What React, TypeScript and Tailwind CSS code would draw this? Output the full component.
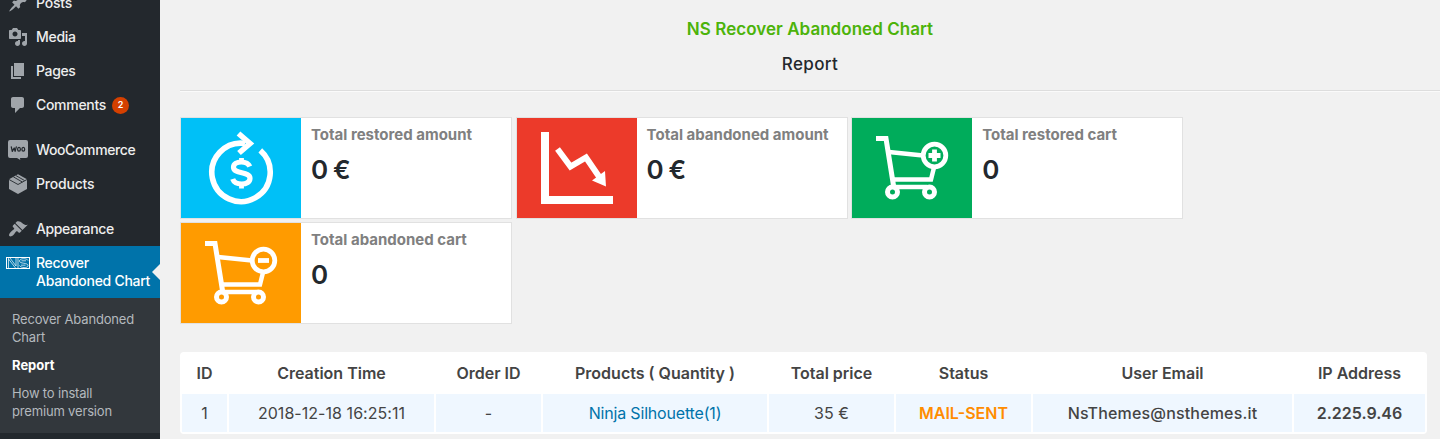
import type { ReactNode } from "react";

const postPath =
  "M10.44 3.02l1.82-1.82 6.36 6.35-1.83 1.82c-1.05-.68-2.48-.57-3.41.36l-.75.75c-.92.93-1.04 2.35-.35 3.41l-1.83 1.82-2.41-2.41-2.8 2.79c-.42.42-3.38 2.71-3.8 2.29s1.86-3.39 2.28-3.81l2.79-2.79L4.1 9.36l1.83-1.82c1.05.69 2.48.57 3.4-.36l.75-.75c.93-.92 1.05-2.35.36-3.41z";
const mediaPath =
  "M13 11V4c0-.55-.45-1-1-1h-1.67L9 1H5L3.67 3H2c-.55 0-1 .45-1 1v7c0 .55.45 1 1 1h10c.55 0 1-.45 1-1zM7 4.5c1.38 0 2.5 1.12 2.5 2.5S8.38 9.5 7 9.5 4.5 8.38 4.5 7 5.62 4.5 7 4.5zM14 6h5v10.5c0 1.38-1.12 2.5-2.5 2.5S14 17.88 14 16.5s1.12-2.5 2.5-2.5c.17 0 .34.02.5.05V9h-3V6zm-4 8.05V13h2v3.5c0 1.38-1.12 2.5-2.5 2.5S7 17.88 7 16.5 8.12 14 9.5 14c.17 0 .34.02.5.05z";
const pagePath = "M6 15V2h10v13H6zm-1 1h8v2H3V5h2v11z";
const commentPath =
  "M5 2h9c1.1 0 2 .9 2 2v7c0 1.1-.9 2-2 2h-2l-5 5v-5H5c-1.1 0-2-.9-2-2V4c0-1.1.9-2 2-2z";
const appearancePath =
  "M14.48 11.06L7.41 3.99l1.5-1.5c.5-.56 2.3-.47 3.51.32 1.21.8 1.43 1.28 2.91 2.1 1.18.64 2.45 1.26 4.45.85zm-.71.71L6.7 4.7 4.93 6.47c-.39.39-.39 1.02 0 1.41l1.06 1.06c.39.39.39 1.03 0 1.42-.6.6-1.43 1.11-2.21 1.69-.35.26-.7.53-1.01.84C1.43 14.23.4 16.08 1.4 17.07c.99 1 2.84-.03 4.18-1.36.31-.31.58-.66.85-1.02.57-.78 1.08-1.61 1.69-2.21.39-.39 1.02-.39 1.41 0l1.06 1.06c.39.39 1.02.39 1.41 0z";

function Glyph({ d }: { d: string }) {
  return (
    <svg viewBox="0 0 20 20" className="size-5 fill-[#a0a5aa]">
      <path d={d} />
    </svg>
  );
}

function WooIcon() {
  return (
    <svg viewBox="0 0 20 20" className="size-5">
      <path
        d="M2 0h16a2 2 0 0 1 2 2v14a2 2 0 0 1-2 2h-6l.3 2L9 18H2a2 2 0 0 1-2-2V2a2 2 0 0 1 2-2z"
        fill="#a0a5aa"
      />
      <g fill="none" stroke="#23282d" strokeWidth="1.25" strokeLinecap="round" strokeLinejoin="round">
        <path d="M3.300 6.800l1 4.600 1.900-3.400.9 3.400 1.200-4.600" />
        <ellipse cx="11" cy="9.200" rx="1.400" ry="1.900" />
        <ellipse cx="15.300" cy="9.200" rx="1.400" ry="1.900" />
      </g>
    </svg>
  );
}

function ProductsIcon() {
  return (
    <svg viewBox="0 0 20 20" className="size-5">
      <path d="M10 0.200L19 5.300v9.600l-9 5.100-9-5.100V5.300z" fill="#a0a5aa" />
      <path
        d="M1 5.500l9 5 9-5M5.300 2.800l9 5.200M7.800 1.500l8.700 5"
        fill="none"
        stroke="#23282d"
        strokeWidth="0.900"
      />
    </svg>
  );
}

function NsIcon() {
  return (
    <svg viewBox="0 0 24 12" className="h-3 w-6" fill="none" stroke="#fff" strokeWidth="0.700">
      <rect x="0.500" y="0.500" width="23" height="11" strokeWidth="1" />
      <path d="M2.500 11V1M4 1l6 8V1M2.500 2l7 9M12 11V1" />
      <path d="M22 3.500C21 1 13.500 1 13.500 4S22 5.500 22 8.500s-7.500 2.500-8.500 0M20 3.800h-4.500M19.500 8.200H15" />
    </svg>
  );
}

function MenuItem({ icon, children }: { icon: ReactNode; children: ReactNode }) {
  return (
    <div className="flex h-[34px] items-center gap-2 pl-2 text-[14px] font-medium leading-[18px] text-[#eee]">
      {icon}
      {children}
    </div>
  );
}

function Sidebar() {
  return (
    <aside className="w-[160px] shrink-0 overflow-hidden bg-[#23282d]">
      <nav className="-mt-[14px]">
        <MenuItem icon={<Glyph d={postPath} />}>
          <span className="tracking-[-0.2px]">Posts</span>
        </MenuItem>
        <MenuItem icon={<Glyph d={mediaPath} />}>
          <span className="tracking-[-0.3px]">Media</span>
        </MenuItem>
        <MenuItem icon={<Glyph d={pagePath} />}>
          <span className="tracking-[-0.35px]">Pages</span>
        </MenuItem>
        <MenuItem icon={<Glyph d={commentPath} />}>
          <span className="tracking-[-0.3px]">Comments</span>
          <span className="-ml-0.5 flex size-[17px] items-center justify-center rounded-full bg-[#d54000] text-[9px] font-semibold text-white">
            2
          </span>
        </MenuItem>
        <div className="h-[11px]" />
        <MenuItem icon={<WooIcon />}>
          <span className="tracking-[-0.38px]">WooCommerce</span>
        </MenuItem>
        <MenuItem icon={<ProductsIcon />}>
          <span className="tracking-[-0.2px]">Products</span>
        </MenuItem>
        <div className="h-[11px]" />
        <MenuItem icon={<Glyph d={appearancePath} />}>
          <span className="tracking-[-0.38px]">Appearance</span>
        </MenuItem>
        <div className="relative flex h-[52px] bg-[#0073aa] pl-1.5 pt-2 text-[14px] font-medium leading-[18px] text-white">
          <span className="mt-[3px] w-[30px]">
            <NsIcon />
          </span>
          <span className="whitespace-nowrap tracking-[-0.28px]">
            Recover
            <br />
            Abandoned Chart
          </span>
          <svg viewBox="0 0 8 16" className="absolute right-0 top-[18px] h-4 w-2 fill-[#f1f1f1]">
            <path d="M8 0v16L0 8z" />
          </svg>
        </div>
        <div className="flex h-[135px] flex-col gap-2.5 whitespace-nowrap bg-[#32373c] pl-3 pt-3 text-[13px] leading-[18px] tracking-[-0.17px] text-[#b4b9be]">
          <p>
            Recover Abandoned
            <br />
            Chart
          </p>
          <p className="font-bold tracking-normal text-white">Report</p>
          <p>
            How to install
            <br />
            premium version
          </p>
        </div>
      </nav>
    </aside>
  );
}

function MoneyIcon() {
  return (
    <svg viewBox="0 0 120 100" className="h-[100px] w-[120px]" fill="none" stroke="#fff">
      <path d="M79.300 32.400A29.200 29.200 0 1 1 64 25.400" strokeWidth="5.600" />
      <path d="M57.500 15.500L69 25.500 58 35" strokeWidth="5.600" />
      <path
        d="M68.800 48.500c-1.300-3-4.800-4.500-8.500-4.500-4.600 0-7.800 2.200-7.800 5.300 0 7.200 16.500 3.800 16.500 11 0 3.700-3.500 5.700-8.300 5.700-4.200 0-7.800-1.600-9-5"
        strokeWidth="5.200"
      />
      <path d="M60.500 40v4M60.500 65v5.500" strokeWidth="4.800" />
    </svg>
  );
}

function DeclineIcon() {
  return (
    <svg viewBox="0 0 120 100" className="h-[100px] w-[120px]" fill="none" stroke="#fff">
      <path d="M28 14v68h68" strokeWidth="8" />
      <path d="M40.500 31L53.500 48.500 69 39.500 83 60" strokeWidth="6" />
      <path d="M89 68.500L88 53 75 62.500z" fill="#fff" stroke="none" />
    </svg>
  );
}

function CartIcon({ plus }: { plus?: boolean }) {
  return (
    <svg viewBox="0 0 120 100" className="h-[100px] w-[120px]" fill="none" stroke="#fff">
      <path d="M24 20.500h10l7.500 47" strokeWidth="5" />
      <path d="M37 34l34 3.500M40 61.500h39l3-12" strokeWidth="4.500" />
      <path d="M43 69h32" strokeWidth="4.500" />
      <circle cx="40.500" cy="74" r="5" strokeWidth="5" />
      <circle cx="77.500" cy="74" r="5" strokeWidth="5" />
      <circle cx="82.500" cy="37.500" r="11.300" strokeWidth="4.800" />
      <path d={plus ? "M76.500 37.500h12M82.500 31.500v12" : "M77 37.500h11"} strokeWidth="4.800" />
    </svg>
  );
}

type CardProps = { color: string; icon: ReactNode; label: string; value: string };

function Card({ color, icon, label, value }: CardProps) {
  return (
    <section className="flex h-[102px] w-[332px] border border-[#e1e1e1] bg-white">
      <div className={`w-[120px] ${color}`}>{icon}</div>
      <div className="pl-2.5">
        <h3 className="mt-[7px] text-[15px] font-bold leading-5 text-[#808080]">{label}</h3>
        <p className="mt-[9px] text-[26px] font-semibold leading-8 tracking-[-0.9px] text-[#23282d]">{value}</p>
      </div>
    </section>
  );
}

const headings = [
  "ID",
  "Creation Time",
  "Order ID",
  "Products ( Quantity )",
  "Total price",
  "Status",
  "User Email",
  "IP Address",
];

const cells = [
  { text: "1", style: "" },
  { text: "2018-12-18 16:25:11", style: "tracking-[0.05px]" },
  { text: "-", style: "" },
  { text: "Ninja Silhouette(1)", style: "tracking-[-0.18px] text-[#0073aa]" },
  { text: "35 €", style: "" },
  { text: "MAIL-SENT", style: "font-semibold text-[#ff8c00]" },
  { text: "NsThemes@nsthemes.it", style: "font-medium tracking-[0.17px]" },
  { text: "2.225.9.46", style: "font-semibold" },
];

const columns = "grid grid-cols-[45px_205px_105px_224px_125px_135px_259px_131px] gap-x-0.5";

export default function App() {
  return (
    <div className="flex h-[439px] w-[1440px] overflow-hidden bg-[#f1f1f1] font-['Inter','Liberation_Sans',sans-serif]">
      <Sidebar />
      <main className="ml-5 flex-1">
        <header className="h-[92px] border-b border-[#fafafa] text-center">
          <div className="h-[91px] border-b border-[#dddddd] pt-[17px]">
            <h1 className="text-[17px] font-semibold leading-6 tracking-[0.04px] text-[#4cb30a]">
              NS Recover Abandoned Chart
            </h1>
            <h2 className="mt-[11px] text-[17px] font-medium leading-6 tracking-[0.35px] text-[#23282d]">Report</h2>
          </div>
        </header>
        <div className="mt-[25px] flex flex-wrap gap-x-[3.6px] gap-y-[3px]">
          <Card color="bg-[#00c0f7]" icon={<MoneyIcon />} label="Total restored amount" value="0 €" />
          <Card color="bg-[#ec3a2a]" icon={<DeclineIcon />} label="Total abandoned amount" value="0 €" />
          <Card color="bg-[#00ac5b]" icon={<CartIcon plus />} label="Total restored cart" value="0" />
          <Card color="bg-[#ff9b00]" icon={<CartIcon />} label="Total abandoned cart" value="0" />
        </div>
        <div className="mt-7 h-[82px] w-[1247px] rounded bg-white px-0.5 pt-0.5 text-center text-[16px] text-[#444]">
          <div className={columns}>
            {headings.map((h) => (
              <div key={h} className="h-10 whitespace-nowrap font-semibold leading-[39px]">
                {h}
              </div>
            ))}
          </div>
          <div className={columns}>
            {cells.map((c) => (
              <div key={c.text} className={`h-[38px] whitespace-nowrap bg-[#eff7ff] leading-[38px] ${c.style}`}>
                {c.text}
              </div>
            ))}
          </div>
        </div>
      </main>
    </div>
  );
}
